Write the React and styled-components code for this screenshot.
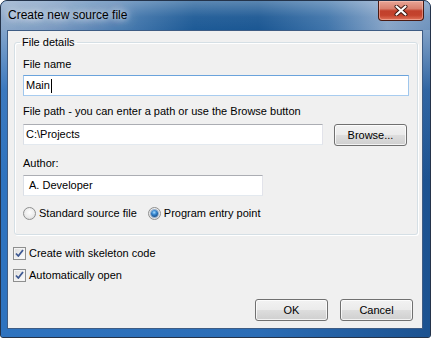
import React from "react";
import styled, { createGlobalStyle } from "styled-components";

const Global = createGlobalStyle`
  html, body { margin: 0; padding: 0; background: #ffffff; }
  body {
    font-family: "Liberation Sans", Arial, sans-serif;
    font-size: 11px;
    color: #000;
    -webkit-font-smoothing: antialiased;
  }
  #root { width: 431px; height: 338px; }
`;

const Window = styled.div`
  box-sizing: border-box;
  width: 431px;
  height: 338px;
  display: flex;
  flex-direction: column;
  border: 1px solid #24334a;
  border-radius: 7px 7px 3px 3px;
  overflow: hidden;
  background: #2c6db4;
`;

const TitleBar = styled.div`
  height: 29px;
  flex: none;
  display: flex;
  align-items: flex-start;
  justify-content: space-between;
  padding: 0 6px 0 7px;
  background:
    linear-gradient(to bottom, rgba(255, 255, 255, 0.28) 0%, rgba(255, 255, 255, 0.05) 55%, rgba(255, 255, 255, 0) 100%),
    linear-gradient(to right, #8aa6c8 0%, #7d9dc3 10%, #4a7cb0 28%, #1d5a96 45%, #1b5793 60%, #3f74aa 76%, #88a5c8 90%, #6f93bd 100%);
`;

const Title = styled.div`
  font-size: 12px;
  line-height: 29px;
  color: #000;
  text-shadow: 0 0 6px rgba(255, 255, 255, 0.95), 0 0 12px rgba(255, 255, 255, 0.85), 0 0 18px rgba(255, 255, 255, 0.6);
`;

const CloseButton = styled.div`
  box-sizing: border-box;
  width: 46px;
  height: 20px;
  display: flex;
  align-items: center;
  justify-content: center;
  border: 1px solid #4a1a12;
  border-top: none;
  border-radius: 0 0 4px 4px;
  background: linear-gradient(
    to bottom,
    #e8a596 0%,
    #d9806e 40%,
    #c2412c 52%,
    #c4432d 75%,
    #e0735a 100%
  );
  box-shadow: inset 0 0 0 1px rgba(255, 210, 200, 0.45);
`;

const FrameBody = styled.div`
  flex: 1;
  display: flex;
  padding: 0 7px 8px 6px;
  background:
    linear-gradient(to bottom, rgba(140, 170, 205, 0.9) 0px, rgba(80, 130, 190, 0.4) 60px, rgba(0, 0, 0, 0) 150px),
    linear-gradient(to right, #2e73bf 0%, #2b6db6 60%, #1c5290 100%);
`;

const Client = styled.div`
  box-sizing: border-box;
  flex: 1;
  display: flex;
  flex-direction: column;
  background: #f0f0f0;
  border: 1px solid #3e5c84;
  padding: 4px 4px 7px 5px;
`;

const Group = styled.fieldset`
  margin: 0 0 0 1px;
  padding: 9px 8px 14px 8px;
  border: 1px solid #d5dfe5;
  border-radius: 3px;
  box-shadow: inset 1px 1px 0 #ffffff, 1px 1px 0 #ffffff;
  display: flex;
  flex-direction: column;
  min-width: 0;
`;

const Legend = styled.legend`
  padding: 0 2px;
  margin-left: -3px;
  line-height: 14px;
`;

const Label = styled.div`
  line-height: 13px;
  margin-top: ${(p) => p.$mt || 0}px;
`;

const TextBox = styled.div`
  box-sizing: border-box;
  height: 21px;
  width: ${(p) => p.$w || "100%"};
  flex: none;
  margin-top: ${(p) => p.$mt || 0}px;
  background: #fff;
  border: 1px solid;
  border-color: ${(p) =>
    p.$focused ? "#6aa3dc #9fc6ec #a8ccef #9fc6ec" : "#abadb3 #e2e3ea #e3e9ef #dbdfe6"};
  padding-left: ${(p) => p.$pl || 2}px;
  display: flex;
  align-items: center;
  line-height: 13px;
  white-space: nowrap;
`;

const Caret = styled.span`
  display: inline-block;
  width: 1px;
  height: 14px;
  background: #000;
  margin-left: 1px;
`;

const FieldRow = styled.div`
  display: flex;
  align-items: flex-start;
  gap: 11px;
  margin-top: ${(p) => p.$mt || 0}px;
`;

const Button = styled.button`
  box-sizing: border-box;
  width: 73px;
  height: 22px;
  padding: 0;
  margin: 0;
  font-family: inherit;
  font-size: 11px;
  color: #000;
  border: 1px solid #707070;
  border-radius: 3px;
  background: linear-gradient(to bottom, #f2f2f2 0%, #ebebeb 48%, #dddddd 52%, #cfcfcf 100%);
  box-shadow: inset 0 0 0 1px rgba(255, 255, 255, 0.75);
`;

const RadioRow = styled.div`
  display: flex;
  align-items: center;
  gap: 11px;
  margin-top: 11px;
  line-height: 13px;
`;

const Option = styled.label`
  display: flex;
  align-items: center;
  gap: 3px;
`;

const RadioCircle = styled.span`
  box-sizing: border-box;
  width: 13px;
  height: 13px;
  border-radius: 50%;
  border: 1px solid #8e8f8f;
  background: radial-gradient(circle at 50% 40%, #fdfdfd 0%, #ececec 55%, #d2d2d2 100%);
  display: flex;
  align-items: center;
  justify-content: center;
  flex: none;
`;

const RadioDot = styled.span`
  width: 7px;
  height: 7px;
  border-radius: 50%;
  background: radial-gradient(circle at 45% 35%, #a8dcff 0%, #3a8ad2 35%, #15508e 75%, #0c3766 100%);
  box-shadow: 0 0 0 1px rgba(60, 110, 170, 0.5);
`;

const CheckRow = styled.label`
  display: flex;
  align-items: center;
  gap: 3px;
  line-height: 13px;
  margin-top: ${(p) => p.$mt || 0}px;
`;

const CheckBox = styled.span`
  box-sizing: border-box;
  width: 13px;
  height: 13px;
  flex: none;
  border: 1px solid #8e8f8f;
  background: linear-gradient(135deg, #dcdcdc 0%, #f0f0f0 60%, #ffffff 100%);
  box-shadow: inset 0 0 0 1px #f4f4f4;
  display: flex;
  align-items: center;
  justify-content: center;
`;

const ButtonRow = styled.div`
  margin-top: auto;
  display: flex;
  justify-content: flex-end;
  gap: 12px;
  padding-right: 5px;
`;

function CloseGlyph() {
  return (
    <svg width="14" height="11" viewBox="0 0 14 11">
      <path d="M2.5 1.5 L11.5 9.5 M11.5 1.5 L2.5 9.5" stroke="#3b1710" strokeWidth="4" strokeLinecap="round" />
      <path d="M2.5 1.5 L11.5 9.5 M11.5 1.5 L2.5 9.5" stroke="#ffffff" strokeWidth="2.2" strokeLinecap="round" />
    </svg>
  );
}

function CheckMark() {
  return (
    <svg width="11" height="11" viewBox="0 0 11 11">
      <path d="M2 5.5 L4.3 8 L9 2" stroke="#3d5892" strokeWidth="1.8" fill="none" strokeLinejoin="round" />
    </svg>
  );
}

function Radio({ checked, children }) {
  return (
    <Option>
      <RadioCircle>{checked && <RadioDot />}</RadioCircle>
      {children}
    </Option>
  );
}

function Check({ children, mt }) {
  return (
    <CheckRow $mt={mt}>
      <CheckBox>
        <CheckMark />
      </CheckBox>
      {children}
    </CheckRow>
  );
}

export default function App() {
  return (
    <>
      <Global />
      <Window>
        <TitleBar>
          <Title>Create new source file</Title>
          <CloseButton>
            <CloseGlyph />
          </CloseButton>
        </TitleBar>
        <FrameBody>
          <Client>
            <Group>
              <Legend>File details</Legend>
              <Label>File name</Label>
              <TextBox $mt={4} $focused>
                Main
                <Caret />
              </TextBox>
              <Label $mt={9}>File path - you can enter a path or use the Browse button</Label>
              <FieldRow $mt={6}>
                <TextBox $w="300px">C:\Projects</TextBox>
                <Button>Browse...</Button>
              </FieldRow>
              <Label $mt={11}>Author:</Label>
              <TextBox $mt={5} $w="240px" $pl={5}>
                A. Developer
              </TextBox>
              <RadioRow>
                <Radio>Standard source file</Radio>
                <Radio checked>Program entry point</Radio>
              </RadioRow>
            </Group>
            <Check mt={12}>Create with skeleton code</Check>
            <Check mt={9}>Automatically open</Check>
            <ButtonRow>
              <Button>OK</Button>
              <Button>Cancel</Button>
            </ButtonRow>
          </Client>
        </FrameBody>
      </Window>
    </>
  );
}
